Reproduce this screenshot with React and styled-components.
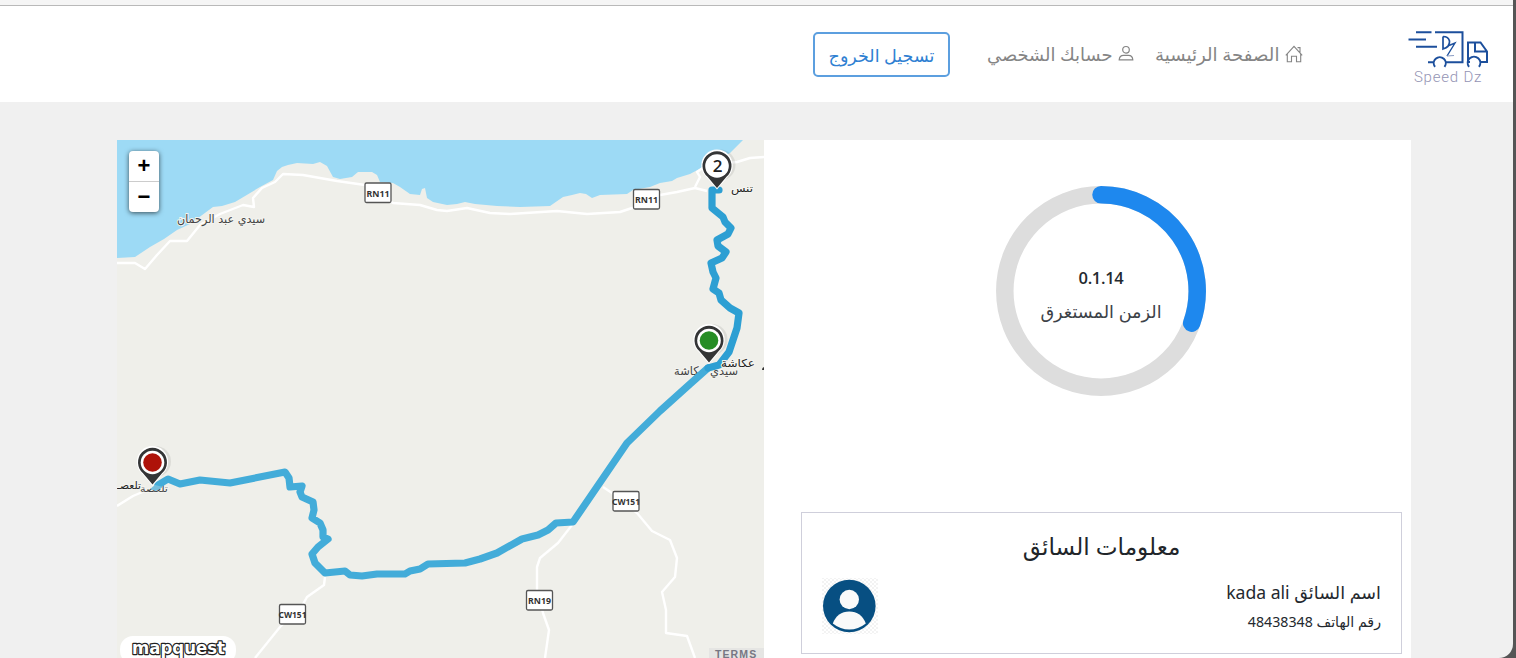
import React from "react";
import styled, { createGlobalStyle } from "styled-components";

const GlobalStyle = createGlobalStyle`
  * { box-sizing: border-box; }
  body {
    margin: 0;
    background: #555;
    font-family: "Noto Sans", "DejaVu Sans", sans-serif;
    color: #24292e;
    overflow: hidden;
  }
`;

const Window = styled.div`
  width: 1513px;
  height: 658px;
  background: #f0f0f0;
  border-bottom-right-radius: 14px;
  overflow: hidden;
  display: flex;
  flex-direction: column;
`;

const TopEdge = styled.div`
  height: 6px;
  flex: none;
  background: #f5f5f5;
  border-bottom: 1px solid #b9b9b9;
`;

const Navbar = styled.header`
  direction: rtl;
  height: 96px;
  flex: none;
  background: #fff;
  display: flex;
  align-items: flex-start;
  padding-right: 23px;
`;

const Brand = styled.a`
  width: 84px;
  margin-top: 22px;
  display: flex;
  flex-direction: column;
  align-items: center;
`;

const BrandName = styled.span`
  direction: ltr;
  margin-top: 1px;
  font: 300 15px/16px Roboto, "Liberation Sans", sans-serif;
  letter-spacing: 0.8px;
  color: #9494b4;
  white-space: nowrap;
`;

const Nav = styled.nav`
  display: flex;
  align-items: flex-start;
  margin-right: 103px;
`;

const NavLink = styled.a`
  width: ${(p) => p.$width}px;
  height: 30px;
  margin-top: 33px;
  margin-left: ${(p) => p.$gap}px;
  display: flex;
  align-items: center;
  justify-content: space-between;
  font-size: ${(p) => p.$size}px;
  color: #858585;
  white-space: nowrap;
  svg { flex: none; }
`;

const LogoutButton = styled.button`
  width: 137px;
  height: 45px;
  margin-top: 26px;
  padding: 0;
  border: 2px solid #5c9fdf;
  border-radius: 5px;
  background: #fff;
  color: #2f80d2;
  font-family: inherit;
  font-size: 17.5px;
  white-space: nowrap;
`;

const Content = styled.main`
  width: 1294px;
  height: 518px;
  margin: 38px 0 0 117px;
  display: flex;
`;

const MapPanel = styled.section`
  position: relative;
  width: 647px;
  height: 518px;
  overflow: hidden;
  background: #efefea;
  svg { display: block; }
`;

const ZoomControl = styled.div`
  position: absolute;
  left: 12px;
  top: 11px;
  width: 30px;
  border-radius: 4px;
  background: #fff;
  box-shadow: 0 1px 5px rgba(0, 0, 0, 0.65);
`;

const ZoomButton = styled.button`
  display: flex;
  align-items: center;
  justify-content: center;
  width: 30px;
  height: ${(p) => (p.$divided ? 31 : 30)}px;
  padding: 0;
  border: 0;
  border-bottom: ${(p) => (p.$divided ? "1px solid #ccc" : "0")};
  background: none;
  font: bold 22px/20px "Liberation Sans", sans-serif;
  color: #000;
`;

const Terms = styled.div`
  position: absolute;
  right: 0;
  bottom: 0;
  width: 55px;
  height: 10px;
  padding-left: 6px;
  background: #e5e5e3;
  font: bold 10.5px/13px "Liberation Sans", sans-serif;
  letter-spacing: 1.1px;
  color: #777783;
`;

const Side = styled.section`
  width: 647px;
  height: 518px;
  padding: 46px 9px 0 37px;
  background: #fff;
  display: flex;
  flex-direction: column;
`;

const Ring = styled.div`
  display: grid;
  width: 210px;
  height: 210px;
  margin: 0 0 116px 195px;
  > * { grid-area: 1 / 1; }
`;

const RingText = styled.div`
  direction: rtl;
  display: flex;
  flex-direction: column;
  align-items: center;
  padding-top: 78px;
  white-space: nowrap;
`;

const Elapsed = styled.strong`
  font-family: "Open Sans", sans-serif;
  font-size: 16.5px;
  font-weight: 600;
  letter-spacing: -0.3px;
  line-height: 28px;
`;

const ElapsedLabel = styled.span`
  margin-top: 4px;
  font-size: 17.7px;
  line-height: 30px;
  color: #3d4248;
`;

const DriverCard = styled.article`
  direction: rtl;
  height: 142px;
  border: 1px solid #cfcfdb;
  padding: 13px 20px 0;
`;

const DriverTitle = styled.h2`
  margin: 0;
  text-align: center;
  font-size: 23.2px;
  line-height: 40px;
  font-weight: 400;
  color: #212529;
`;

const DriverRow = styled.div`
  display: flex;
  justify-content: space-between;
  margin-top: 11px;
`;

const DriverDetail = styled.div`
  font-size: ${(p) => p.$size}px;
  line-height: ${(p) => p.$line}px;
  white-space: nowrap;
`;

const Shield = ({ x, y, label }) => (
  <g>
    <rect x={x} y={y} width="26" height="19.5" rx="1.5" fill="#fff" stroke="#555" strokeWidth="1.3" />
    <text x={x + 13} y={y + 13.5} textAnchor="middle" textLength={label.length > 4 ? 28 : 23} lengthAdjust="spacingAndGlyphs" fontFamily="Noto Sans, sans-serif" fontWeight="700" fontSize="9.3" fill="#333">{label}</text>
  </g>
);

const Pin = ({ x, y, fill, label }) => (
  <g transform={`translate(${x} ${y})`}>
    <circle cx="3" cy="-1" r="15.5" fill="#000" opacity=".08" />
    <path d="M0 23.500L-11 10.500A15.700 15.700 0 1 1 11 10.500Z" fill="#fff" />
    <path d="M0 22L-9.500 10.800A14.500 14.500 0 1 1 9.500 10.800Z" fill="#343536" />
    <circle r="11.8" fill="#fff" />
    {fill && <circle r="9.3" fill={fill} />}
    {label && <text y="5.700" x="0.700" textAnchor="middle" fontFamily="Open Sans, sans-serif" fontSize="17" fontWeight="600" fill="#222">{label}</text>}
  </g>
);

const Place = ({ x, y, width, size, color = "#444", children }) => (
  <text x={x} y={y} textLength={width} lengthAdjust="spacingAndGlyphs" fontFamily="DejaVu Sans, sans-serif" fontSize={size} fill={color} stroke="#f4f4f0" strokeWidth="2" paintOrder="stroke">{children}</text>
);

const RouteMap = () => (
  <svg width="647" height="518" viewBox="117 140 647 518">
    <path fill="#9ddaf5" d="M117 140V258L135 257L150 247L164 239L177 230L190 224L213 207L222 206L235 202L260 187L273 180L277 171L282 167L288 165L297 163L313 164L320 162L327 166L333 177L340 179L352 177L358 172L372 172L377 175L380 182L393 183L400 187L410 194L420 195L422 189L425 188L427 198L433 202L447 205L457 204L465 202L475 204L497 206L520 207L550 206L563 197L572 195L580 193L586 194L592 198L600 195L627 194L633 190L650 187L660 183L672 181L677 178L690 174L703 167L730 153L743 140Z" />
    <g fill="none" stroke="#fff" strokeWidth="2.400" strokeLinejoin="round">
      <path d="M117 263L135 263L145 269L157 255L170 241L187 241L200 225L220 214L243 205L254 207L253 198L262 188L275 182L283 174L303 175L337 181L365 185L393 203L420 205L437 210L447 211L467 208L490 213L510 214L557 211L587 214L620 212L635 207L660 195L677 192L695 188L707 191" />
      <path d="M695 187L700 177L697 172L707 165L737 162L750 158L764 157" />
      <path d="M603 487L612 493L637 513L652 531L670 540L677 558L675 577L662 592L666 610L666 633L687 636L695 658" />
      <path d="M572 525L558 543L540 558L537 567L537 590L543 613L549 630L545 658" />
      <path d="M325 577L324 585L307 597L302 606L280 627L255 658" />
      <path d="M117 506L133 496L147 490" />
    </g>
    <Place x={177} y={223} width={88} size={12}>سيدي عبد الرحمان</Place>
    <Place x={731} y={192} width={22} size={10.5} color="#222">تنس</Place>
    <Place x={674} y={375} width={64} size={12}>سيدي عكاشة</Place>
    <Place x={140} y={492} width={28} size={10}>تلعصة</Place>
    <path fill="none" stroke="#43acd9" strokeWidth="7.200" strokeLinecap="round" strokeLinejoin="round" d="M708 368L690 384L660 411L627 443L573 522L556 523L548 530L538 535L522 539L497 553L480 559L465 563L428 564L420 569L410 571L405 574L377 574L362 576L350 575L345 571L325 573L315 563L312 554L318 547L328 539L323 537L323 530L320 523L312 518L314 510L313 502L302 497L300 492L302 486L290 487L289 478L285 472L230 483L200 480L180 484L168 479L158 485" />
    <path fill="none" stroke="#2d9fd3" strokeWidth="7.200" strokeLinecap="round" strokeLinejoin="round" d="M719 190L712 190L712 208L723 217L725 222L731 228L728 234L717 240L718 246L726 252L722 258L711 263L713 272L716 278L713 289L719 293L721 300L730 308L739 313L737 328L729 352L719 365L708 368" />
    <path d="M150 489l5-4 8 2-7 4z" fill="#75bedd" />
    <Place x={721} y={367} width={34} size={11} color="#222">عكاشة</Place>
    <Place x={117} y={489} width={24} size={10.5} color="#222">تلعصـ</Place>
    <path d="M762.500 368l1.500-1v3h-2z" fill="#333" />
    <Shield x={365} y={183} label="RN11" />
    <Shield x={633.5} y={189.500} label="RN11" />
    <Shield x={279.5} y={604.500} label="CW151" />
    <Shield x={526.5} y={590.500} label="RN19" />
    <Shield x={613} y={491.500} label="CW151" />
    <Pin x={717} y={166} label="2" />
    <Pin x={709} y={340.500} fill="#268d25" />
    <Pin x={152.500} y={462.500} fill="#ae1209" />
    <rect x="120" y="636" width="116" height="28" rx="13" fill="#fff" />
    <text x="132" y="653.500" textLength="93" lengthAdjust="spacingAndGlyphs" fontFamily="DejaVu Sans, sans-serif" fontWeight="700" fontSize="17" fill="#fff" stroke="#222" strokeWidth="2.400" strokeLinejoin="round" paintOrder="stroke">mapquest</text>
  </svg>
);

const Truck = () => (
  <svg width="84" height="40" viewBox="1406 28 84 40" fill="none" stroke="#1c4f9c" strokeWidth="2">
    <path d="M1416 32.300h15.500M1435 32.300h27.500v30h-16.500M1408.500 39.500h17.500M1416 46.700h21M1428 62.300h5" />
    <path d="M1435 66.800a6 6 0 1 1 9.500 0M1469 66.800a6.300 6.300 0 1 1 10 0" />
    <path d="M1470 62h-2v-19.500h12.500l6.500 9v10.500h-6M1475 43v8.500h11.500" />
    <path strokeWidth="1.700" d="M1443 36.500v12.500q7-2 6.500-8q-1-4.500-6.500-4.500" />
    <path strokeWidth="1.400" d="M1449 45.500l6-2.500-8 13" />
    <path strokeWidth="1.200" stroke="#8b9dc4" d="M1447 56l7-.500" />
  </svg>
);

const HomeIcon = () => (
  <svg width="18" height="19" viewBox="0 0 18 19" fill="none" stroke="#858585" strokeWidth="1.100">
    <path d="M.8 10.300L9 1.300l8.200 9M12.500 2.600h2.500v5M2.300 9v7.700h4.200v-5.500h5v5.500h4.200V9" />
  </svg>
);

const PersonIcon = () => (
  <svg width="16" height="18" viewBox="0 0 16 18" fill="none" stroke="#858585" strokeWidth="1.200">
    <circle cx="8" cy="4.800" r="3.300" />
    <path d="M1.200 14.800q.3-4.500 4.300-4.500h5q4 0 4.300 4.500Z" />
  </svg>
);

const Progress = () => (
  <svg width="210" height="210" viewBox="-105 -105 210 210" fill="none" strokeWidth="17.500">
    <circle r="96.200" stroke="#ddd" />
    <path d="M0 -96.200A96.200 96.200 0 0 1 90.700 32.100" stroke="#1e88ee" strokeLinecap="round" />
  </svg>
);

const Avatar = () => (
  <svg width="56" height="57" viewBox="0 0 56 57">
    <defs>
      <pattern id="checks" width="4" height="4" patternUnits="userSpaceOnUse">
        <rect width="4" height="4" fill="#fff" />
        <path d="M0 0h2v2H0zM2 2h2v2H2z" fill="#f3f3f3" />
      </pattern>
    </defs>
    <rect y="1" width="56" height="56" fill="url(#checks)" />
    <circle cx="27.300" cy="29" r="26.300" fill="#074f82" />
    <circle cx="27.300" cy="22.500" r="9.700" fill="#fafafa" />
    <path d="M10.800 46.500Q15.300 34.500 27.300 34.500T43.800 46.500Q36.300 52.500 27.300 52.500T10.800 46.500Z" fill="#fafafa" />
  </svg>
);

export default function App() {
  return (
    <>
      <GlobalStyle />
      <Window>
        <TopEdge />
        <Navbar>
          <Brand>
            <Truck />
            <BrandName>Speed Dz</BrandName>
          </Brand>
          <Nav>
            <NavLink $width={148} $gap={21} $size={18.2}><HomeIcon /><span>الصفحة الرئيسية</span></NavLink>
            <NavLink $width={147} $gap={37} $size={17.9}><PersonIcon /><span>حسابك الشخصي</span></NavLink>
            <LogoutButton>تسجيل الخروج</LogoutButton>
          </Nav>
        </Navbar>
        <Content>
          <MapPanel>
            <RouteMap />
            <ZoomControl>
              <ZoomButton $divided>+</ZoomButton>
              <ZoomButton>−</ZoomButton>
            </ZoomControl>
            <Terms>TERMS</Terms>
          </MapPanel>
          <Side>
            <Ring>
              <Progress />
              <RingText>
                <Elapsed>0.1.14</Elapsed>
                <ElapsedLabel>الزمن المستغرق</ElapsedLabel>
              </RingText>
            </Ring>
            <DriverCard>
              <DriverTitle>معلومات السائق</DriverTitle>
              <DriverRow>
                <div>
                  <DriverDetail $size={17.6} $line={31}>اسم السائق kada ali</DriverDetail>
                  <DriverDetail $size={14.2} $line={27}>رقم الهاتف 48438348</DriverDetail>
                </div>
                <Avatar />
              </DriverRow>
            </DriverCard>
          </Side>
        </Content>
      </Window>
    </>
  );
}
